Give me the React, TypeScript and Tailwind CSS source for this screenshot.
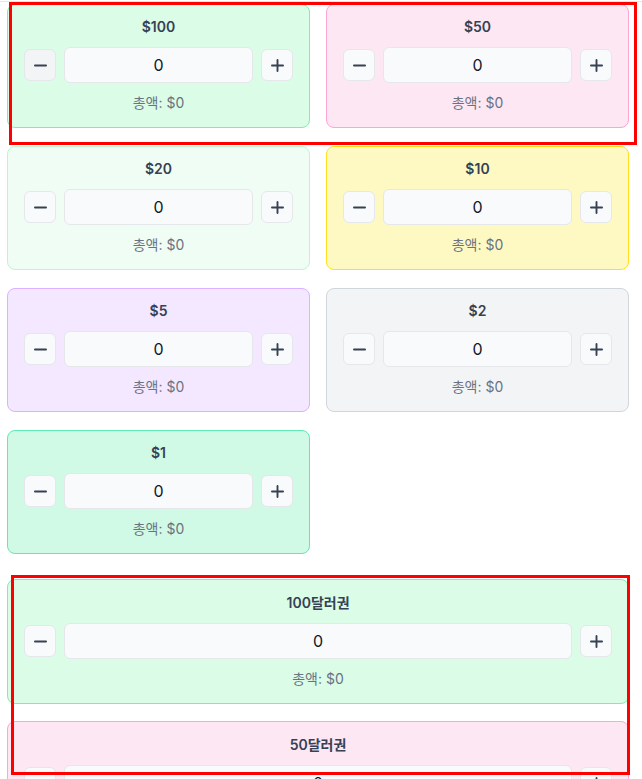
import React from "react";
import { Minus, Plus } from "lucide-react";

type Bill = { label: string; card: string; hover?: boolean };

const gridBills: Bill[] = [
  { label: "$100", card: "bg-green-100 border-green-300", hover: true },
  { label: "$50", card: "bg-pink-100 border-pink-300" },
  { label: "$20", card: "bg-green-50 border-green-200" },
  { label: "$10", card: "bg-yellow-100 border-yellow-300" },
  { label: "$5", card: "bg-purple-100 border-purple-300" },
  { label: "$2", card: "bg-gray-100 border-gray-300" },
  { label: "$1", card: "bg-emerald-100 border-emerald-300" },
];

const listBills: Bill[] = [
  { label: "100달러권", card: "bg-green-100 border-green-300" },
  { label: "50달러권", card: "bg-pink-100 border-pink-300" },
  { label: "20달러권", card: "bg-green-50 border-green-200" },
];

function Card({ bill, list }: { bill: Bill; list?: boolean }) {
  return (
    <div className={`rounded-lg border px-4 ${list ? "h-[125px] pt-[13px]" : "h-[124px] pt-3"} ${bill.card}`}>
      <div className="h-5 text-center text-sm leading-5 font-semibold text-gray-700">{bill.label}</div>
      <div className="mt-[10px] flex h-9 items-center gap-2">
        <button
          className={`flex h-8 w-8 shrink-0 items-center justify-center rounded-md border border-gray-200 text-gray-700 ${
            bill.hover ? "bg-gray-100" : "bg-gray-50"
          }`}
        >
          <Minus size={19} strokeWidth={2.4} />
        </button>
        <div className="flex h-9 flex-1 items-center justify-center rounded-md border border-gray-200 bg-gray-50 text-base text-gray-900">
          0
        </div>
        <button className="flex h-8 w-8 shrink-0 items-center justify-center rounded-md border border-gray-200 bg-gray-50 text-gray-700">
          <Plus size={19} strokeWidth={2.4} />
        </button>
      </div>
      <div className="mt-[10px] text-center text-sm leading-5 text-gray-500">총액: $0</div>
    </div>
  );
}

export default function App() {
  return (
    <div
      className="relative h-[779px] overflow-hidden bg-white"
      style={{ fontFamily: "Inter, 'Noto Sans CJK KR', 'Noto Sans', sans-serif" }}
    >
      <div className="h-px bg-white" />
      <div className="h-px bg-gray-200" />
      <div className="ml-[7px] w-[622px] pt-[2px]">
        <div className="grid grid-cols-2 gap-x-4 gap-y-[18px]">
          {gridBills.map((b) => (
            <Card key={b.label} bill={b} />
          ))}
        </div>
        <div className="mt-[25px] flex flex-col gap-[17px]">
          {listBills.map((b) => (
            <Card key={b.label} bill={b} list />
          ))}
        </div>
      </div>
      <div className="pointer-events-none absolute left-[9px] top-[2px] h-[143px] w-[628px] border-[3px] border-[#ff0000]" />
      <div className="pointer-events-none absolute left-[11px] top-[575px] h-[200px] w-[619px] border-[3px] border-[#ff0000]" />
    </div>
  );
}
